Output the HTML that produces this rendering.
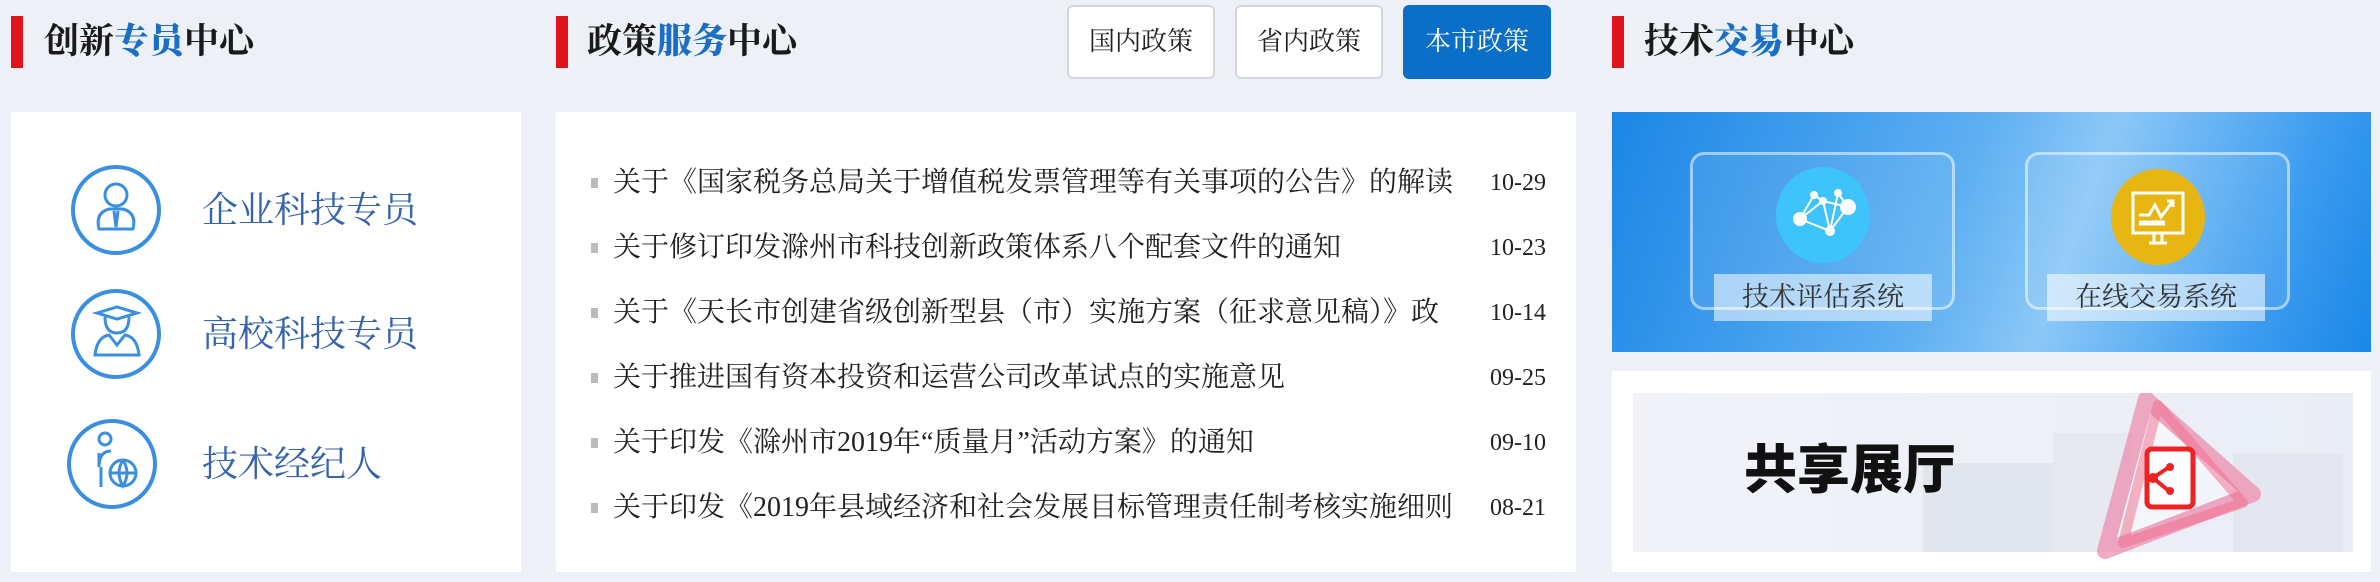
<!DOCTYPE html>
<html><head><meta charset="utf-8"><style>
*{margin:0;padding:0;box-sizing:border-box}
body{width:2380px;height:582px;background:#eef0f7;position:relative;overflow:hidden;font-family:"Liberation Serif","Noto Serif CJK SC",serif;color:#222}
.abs{position:absolute}
.bar{position:absolute;width:12px;height:52px;background:#e0141b;top:16px}
.ttl{position:absolute;top:16px;font-size:35px;line-height:52px;font-weight:bold;color:#1a1a1a}
.ttl b{color:#1a6fc4}
.panel{position:absolute;background:#fff}
.it{position:absolute;left:191px;font-size:36px;color:#3563ad;line-height:40px}
.circ{position:absolute;width:90px;height:90px;border:4px solid #3b8fe0;border-radius:50%;left:60px}
.btn{position:absolute;top:5px;height:74px;width:148px;border:2px solid #d4d6dc;border-radius:6px;background:#fff;font-size:26px;line-height:70px;text-align:center;color:#222}
.row{position:absolute;left:35px;width:955px;height:40px;font-size:28px;line-height:40px;white-space:nowrap}
.row i{position:absolute;left:0;top:15px;width:7px;height:10px;background:#bbb}
.row span{position:absolute;left:22px;width:845px;overflow:hidden}
.row em{position:absolute;right:0;font-style:normal;font-size:24px;width:80px;text-align:right}
.card{position:absolute;top:40px;width:265px;height:158px;border:3px solid rgba(255,255,255,.5);border-radius:14px;background:rgba(255,255,255,.08)}
.lab{position:absolute;width:218px;height:47px;background:rgba(255,255,255,.55);font-size:27px;line-height:47px;text-align:center;color:#333}
</style></head><body>

<div class="bar" style="left:11px"></div>
<div class="ttl" style="left:44px">创新<b>专员</b>中心</div>
<div class="panel" style="left:11px;top:112px;width:510px;height:460px">
  <div class="circ" style="top:53px"><svg width="82" height="82" viewBox="0 0 82 82" fill="none" stroke="#3b8fe0" stroke-width="3"><circle cx="41" cy="26" r="11"/><path d="M24 60 Q20 44 34 40 L48 40 Q62 44 58 60 Z"/><path d="M39 42 L41 58 L43 42"/></svg></div>
  <div class="it" style="top:78px">企业科技专员</div>
  <div class="circ" style="top:177px"><svg width="82" height="82" viewBox="0 0 82 82" fill="none" stroke="#3b8fe0" stroke-width="3"><path d="M22 20 L42 14 L62 20 L42 26 Z"/><path d="M30 24 Q30 40 42 40 Q54 40 54 24"/><path d="M20 62 Q22 44 34 42 L42 52 L50 42 Q62 44 64 62 Z"/></svg></div>
  <div class="it" style="top:202px">高校科技专员</div>
  <div class="circ" style="top:307px;left:56px"><svg width="82" height="82" viewBox="0 0 82 82" fill="none" stroke="#3b8fe0" stroke-width="3"><circle cx="34" cy="16" r="6"/><path d="M30 64 V44 M28 30 V44 Q28 28 40 28"/><circle cx="52" cy="50" r="13"/><path d="M39 50 H65 M52 37 Q44 50 52 63 Q60 50 52 37"/></svg></div>
  <div class="it" style="top:332px">技术经纪人</div>
</div>

<div class="bar" style="left:556px"></div>
<div class="ttl" style="left:587px">政策<b>服务</b>中心</div>
<div class="btn" style="left:1067px">国内政策</div>
<div class="btn" style="left:1235px">省内政策</div>
<div class="btn" style="left:1403px;background:#0b6fc7;border-color:#0b6fc7;color:#fff">本市政策</div>
<div class="panel" style="left:556px;top:112px;width:1020px;height:460px">
  <div class="row" style="top:51px"><i></i><span>关于《国家税务总局关于增值税发票管理等有关事项的公告》的解读</span><em>10-29</em></div>
  <div class="row" style="top:116px"><i></i><span>关于修订印发滁州市科技创新政策体系八个配套文件的通知</span><em>10-23</em></div>
  <div class="row" style="top:181px"><i></i><span>关于《天长市创建省级创新型县（市）实施方案（征求意见稿）》政</span><em>10-14</em></div>
  <div class="row" style="top:246px"><i></i><span>关于推进国有资本投资和运营公司改革试点的实施意见</span><em>09-25</em></div>
  <div class="row" style="top:311px"><i></i><span>关于印发《滁州市2019年“质量月”活动方案》的通知</span><em>09-10</em></div>
  <div class="row" style="top:376px"><i></i><span>关于印发《2019年县域经济和社会发展目标管理责任制考核实施细则</span><em>08-21</em></div>
</div>

<div class="bar" style="left:1612px"></div>
<div class="ttl" style="left:1644px">技术<b>交易</b>中心</div>
<div class="panel" style="left:1612px;top:112px;width:759px;height:240px;background:linear-gradient(110deg,#1b86e6 0%,#5fb0f2 45%,#8cc8f7 60%,#3c9cef 85%,#1a87e8 100%)">
  <div class="card" style="left:78px"></div>
  <div class="abs" style="left:164px;top:55px;width:94px;height:96px;border-radius:50%;background:#3ec3fb"><svg width="94" height="96" viewBox="0 0 94 96" fill="none" stroke="#fff" stroke-width="2"><path d="M24 52 L47 34 L72 40 L54 64 L24 52 M47 34 L54 64 M38 28 L47 34 M62 26 L72 40 M38 28 L24 52 M62 26 L54 64"/><g fill="#fff"><circle cx="24" cy="52" r="6"/><circle cx="72" cy="40" r="7"/><circle cx="54" cy="64" r="4"/><circle cx="47" cy="34" r="3"/><circle cx="38" cy="28" r="3"/><circle cx="62" cy="26" r="3"/></g></svg></div>
  <div class="lab" style="left:102px;top:162px">技术评估系统</div>
  <div class="card" style="left:413px"></div>
  <div class="abs" style="left:499px;top:57px;width:94px;height:96px;border-radius:50%;background:#e8b612"><svg width="94" height="96" viewBox="0 0 94 96" fill="none" stroke="#fff" stroke-width="3"><rect x="22" y="24" width="50" height="40"/><path d="M38 74 H56 M43 64 V74 M51 64 V74 M28 46 H38 L44 36 L50 48 L62 32 M56 32 H62 V38"/><path d="M28 54 H54" stroke-width="5"/></svg></div>
  <div class="lab" style="left:435px;top:162px">在线交易系统</div>
</div>
<div class="panel" style="left:1612px;top:371px;width:759px;height:201px">
  <div class="abs" style="left:21px;top:22px;width:720px;height:159px;background:linear-gradient(90deg,#f1f3f9,#e9edf5)">
    <div class="abs" style="left:290px;top:70px;width:130px;height:89px;background:#e2e6ee"></div>
    <div class="abs" style="left:420px;top:40px;width:80px;height:119px;background:#e6e9f0"></div>
    <div class="abs" style="left:600px;top:60px;width:110px;height:99px;background:#e4e7ef"></div>
    <div class="abs" style="left:111px;top:38px;font-family:'Liberation Sans','Noto Sans CJK SC',sans-serif;font-weight:900;font-size:53px;line-height:80px;color:#111">共享展厅</div>
    <svg class="abs" style="left:440px;top:0" width="200" height="168" viewBox="0 0 200 168"><path d="M73 6 L180 101 L32 158 Z" fill="#fff" fill-opacity=".6" stroke="#ee8fb0" stroke-width="16" opacity=".75" stroke-linejoin="round"/><path d="M85 12 L170 110 L50 150 Z" fill="none" stroke="#f06a8c" stroke-width="10" opacity=".5" stroke-linejoin="round"/><rect x="74" y="56" width="46" height="58" rx="5" fill="#fff" stroke="#e22" stroke-width="5"/><path d="M80 85 L96 74 M80 85 L96 98" stroke="#e22" stroke-width="4"/><circle cx="80" cy="85" r="5" fill="#e22"/><circle cx="97" cy="74" r="4" fill="#e22"/><circle cx="97" cy="98" r="4" fill="#e22"/></svg>
  </div>
</div>
</body></html>
